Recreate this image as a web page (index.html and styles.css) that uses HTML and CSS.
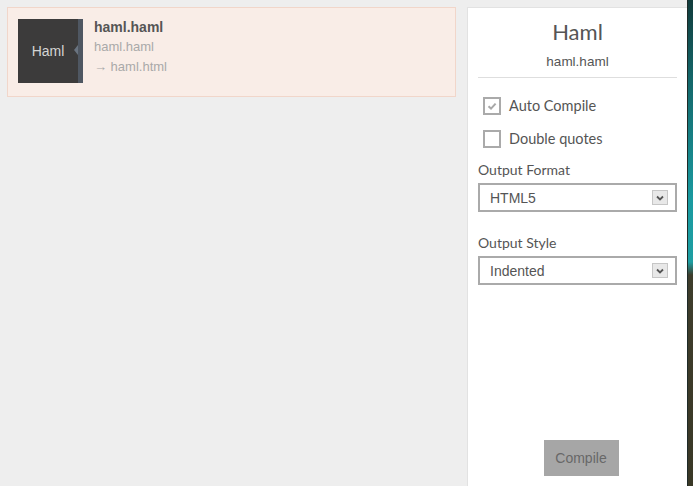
FILE: index.html
```html
<!DOCTYPE html>
<html>
<head>
<meta charset="utf-8">
<link rel="stylesheet" href="styles.css">
</head>
<body>
<div class="app">
  <main class="files">
    <div class="file-card">
      <div class="file-icon">
        <span class="file-icon-label">Haml</span>
        <span class="file-icon-bar"></span>
      </div>
      <div class="file-info">
        <div class="file-name">haml.haml</div>
        <div class="file-path">haml.haml</div>
        <div class="file-path">→ haml.html</div>
      </div>
    </div>
  </main>
  <aside class="panel">
    <h1 class="panel-title">Haml</h1>
    <div class="panel-sub">haml.haml</div>
    <div class="panel-rule"></div>
    <label class="check-row first">
      <span class="check-box"><svg width="14" height="14" viewBox="0 0 14 14"><path d="M3.5 7.3 L6 9.6 L10.6 4.6" fill="none" stroke="#a8a8a8" stroke-width="2"/></svg></span>
      <span class="check-label">Auto Compile</span>
    </label>
    <label class="check-row">
      <span class="check-box"></span>
      <span class="check-label">Double quotes</span>
    </label>
    <div class="field-label">Output Format</div>
    <div class="select">
      <span class="select-value">HTML5</span>
      <span class="select-arrow"><svg width="10" height="8" viewBox="0 0 10 8"><path d="M2 2.5 L5 5.5 L8 2.5" fill="none" stroke="#555" stroke-width="1.8"/></svg></span>
    </div>
    <div class="field-label second">Output Style</div>
    <div class="select">
      <span class="select-value">Indented</span>
      <span class="select-arrow"><svg width="10" height="8" viewBox="0 0 10 8"><path d="M2 2.5 L5 5.5 L8 2.5" fill="none" stroke="#555" stroke-width="1.8"/></svg></span>
    </div>
    <div class="panel-footer">
      <button class="compile-btn">Compile</button>
    </div>
  </aside>
  <div class="desktop-edge"></div>
</div>
</body>
</html>
```
FILE: styles.css
```css
html, body {
  margin: 0;
  padding: 0;
}
body {
  background: #eeeeee;
  font-family: "Liberation Sans", Arial, sans-serif;
  color: #555;
}
.app {
  display: flex;
  height: 486px;
  overflow: hidden;
}
.files {
  flex: 1;
  padding: 7px 0 0 7px;
}
.file-card {
  box-sizing: border-box;
  width: 449px;
  height: 90px;
  background: #f9ede7;
  border: 1px solid #f1d6ca;
  display: flex;
  align-items: flex-start;
  padding: 11px 0 0 10px;
}
.file-icon {
  width: 65px;
  height: 64px;
  display: flex;
  position: relative;
}
.file-icon-label {
  width: 60px;
  background: #3c3b3b;
  color: #d4d4d4;
  font-size: 14px;
  display: flex;
  align-items: center;
  justify-content: center;
}
.file-icon-bar {
  width: 5px;
  background: #4f5762;
  position: relative;
}
.file-icon-bar::before {
  content: "";
  position: absolute;
  left: -4px;
  top: 26px;
  border-style: solid;
  border-width: 5px 4px 5px 0;
  border-color: transparent #6a7480 transparent transparent;
}
.file-info {
  margin-left: 11px;
  margin-top: -2px;
  font-size: 13px;
  line-height: 20px;
}
.file-name {
  font-weight: bold;
  font-size: 14px;
  color: #555;
}
.file-path {
  color: #a9a9a9;
}
.panel {
  box-sizing: border-box;
  width: 220px;
  margin-top: 7px;
  background: #fff;
  border-left: 1px solid #e2e2e2;
  border-top: 1px solid #e2e2e2;
  padding: 0 10px 10px 10px;
  display: flex;
  flex-direction: column;
  font-family: Lato, "Liberation Sans", sans-serif;
}
.panel-title {
  margin: 11px 0 0;
  font-size: 22px;
  line-height: 26px;
  font-weight: normal;
  text-align: center;
  color: #555;
}
.panel-sub {
  margin-top: 9px;
  font-family: "Liberation Sans", Arial, sans-serif;
  font-size: 13.5px;
  line-height: 16px;
  text-align: center;
  color: #555;
}
.panel-rule {
  height: 1px;
  background: #dedede;
  margin-top: 7px;
}
.check-row {
  display: flex;
  align-items: center;
  height: 18px;
  margin-top: 15px;
  padding-left: 5px;
}
.check-row.first {
  margin-top: 18px;
}
.check-box {
  box-sizing: border-box;
  width: 18px;
  height: 18px;
  border: 2px solid #aaaaaa;
  display: flex;
  align-items: center;
  justify-content: center;
  margin-top: 2px;
}
.check-label {
  margin-left: 8px;
  font-size: 14.5px;
  color: #555;
}
.field-label {
  margin-top: 14px;
  font-size: 14px;
  line-height: 18px;
  color: #555;
}
.field-label.second {
  margin-top: 22px;
}
.select {
  box-sizing: border-box;
  margin-top: 4px;
  height: 29px;
  border: 2px solid #aaaaaa;
  display: flex;
  align-items: center;
  padding: 0 7px 0 10px;
}
.select-value {
  flex: 1;
  font-family: "Liberation Sans", Arial, sans-serif;
  font-size: 14px;
  color: #555;
}
.select-arrow {
  box-sizing: border-box;
  width: 16px;
  height: 15px;
  background: #e8e8e8;
  border: 1px solid #c6c6c6;
  display: flex;
  align-items: center;
  justify-content: center;
}
.panel-footer {
  margin-top: auto;
  display: flex;
  justify-content: center;
  padding-left: 7px;
}
.compile-btn {
  width: 75px;
  height: 36px;
  border: none;
  background: #a6a6a6;
  color: #686868;
  font-family: "Liberation Sans", Arial, sans-serif;
  font-size: 14px;
  padding: 0;
}
.desktop-edge {
  width: 6px;
  border-left: 1px solid #1e2a28;
  box-sizing: border-box;
  background: linear-gradient(to bottom, #123c3c 0px, #14676a 80px, #1a9aa0 200px, #1e9ea2 262px, #3e3d2c 275px, #3a3826 486px);
}
```
